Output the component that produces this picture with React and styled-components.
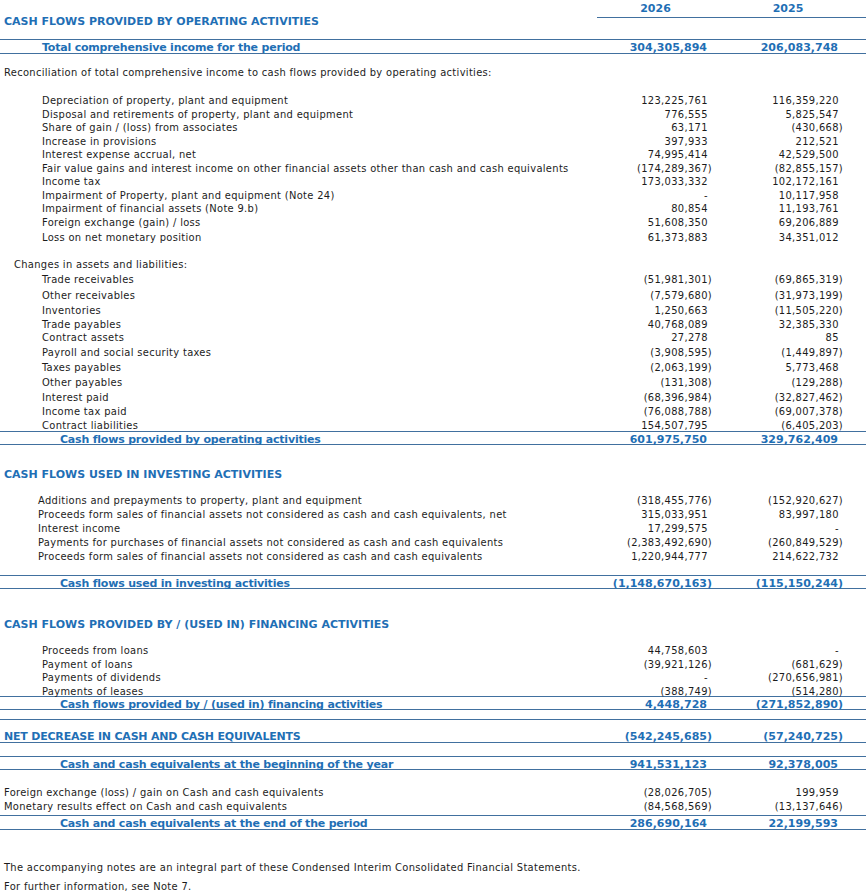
import React from 'react';
import styled, { createGlobalStyle } from 'styled-components';

const BLUE = '#1f6fb5';
const LINE = '#41709f';

const GlobalStyle = createGlobalStyle`
  html, body {
    margin: 0;
    padding: 0;
    background: #fff;
    overflow: hidden;
  }
  body {
    font-family: "DejaVu Sans Condensed", "DejaVu Sans", sans-serif;
    font-size: 11px;
    letter-spacing: 0.33px;
    color: #1c1c1c;
  }
`;

const Sheet = styled.div`
  width: 866px;
`;

const Spacer = styled.div`
  height: ${p => p.$h}px;
`;

const Row = styled.div`
  display: grid;
  grid-template-columns: 1fr 123px 146px;
  height: ${p => p.$h}px;
  line-height: ${p => p.$h + 4}px;
  white-space: nowrap;
`;

const TotalRow = styled(Row)`
  border-top: 1px solid ${LINE};
  border-bottom: 1px solid ${LINE};
  padding-top: ${p => p.$pt || 0}px;
  height: ${p => p.$h - (p.$pt || 0)}px;
  line-height: ${p => p.$h - (p.$pt || 0) + 3}px;
  color: ${BLUE};
  font-family: "DejaVu Sans", sans-serif;
  font-weight: bold;
  letter-spacing: 0;
`;

const Label = styled.div`
  padding-left: ${p => p.$indent}px;
  letter-spacing: ${p => (p.$bold ? '-0.2px' : 'inherit')};
`;

const Year = styled.div`
  text-align: center;
  padding-right: ${p => p.$pr}px;
  border-bottom: 1px solid ${LINE};
  color: ${BLUE};
  font-family: "DejaVu Sans", sans-serif;
  font-weight: bold;
  letter-spacing: 0;
`;

const SectionTitle = styled.div`
  height: ${p => p.$h}px;
  line-height: ${p => p.$h + 4}px;
  padding-left: 4px;
  color: ${BLUE};
  font-family: "DejaVu Sans", sans-serif;
  font-weight: bold;
  letter-spacing: 0;
  white-space: nowrap;
`;

const Note = styled.div`
  height: ${p => p.$h}px;
  line-height: ${p => p.$h + 4}px;
  padding-left: ${p => p.$indent || 4}px;
  white-space: nowrap;
`;

const Num = styled.div`
  text-align: right;
  padding-right: ${p => p.$pr}px;
`;

const Ghost = styled.span`
  visibility: hidden;
`;

const Value = ({ v, col }) => {
  const neg = v.startsWith('(');
  return (
    <Num $pr={col === 1 ? 8 : 23}>
      {v}
      {!neg && <Ghost>)</Ghost>}
    </Num>
  );
};

const Line = ({ label, a, b, indent, h }) => (
  <Row $h={h}>
    <Label $indent={indent}>{label}</Label>
    <Value v={a} col={1} />
    <Value v={b} col={2} />
  </Row>
);

const Total = ({ label, a, b, indent = 60, h = 12, pt }) => (
  <TotalRow $h={h} $pt={pt}>
    <Label $indent={indent} $bold>{label}</Label>
    <Value v={a} col={1} />
    <Value v={b} col={2} />
  </TotalRow>
);

const operating = [
  ['Depreciation of property, plant and equipment', '123,225,761', '116,359,220'],
  ['Disposal and retirements of property, plant and equipment', '776,555', '5,825,547'],
  ['Share of gain / (loss) from associates', '63,171', '(430,668)'],
  ['Increase in provisions', '397,933', '212,521'],
  ['Interest expense accrual, net', '74,995,414', '42,529,500'],
  ['Fair value gains and interest income on other financial assets other than cash and cash equivalents', '(174,289,367)', '(82,855,157)'],
  ['Income tax', '173,033,332', '102,172,161'],
  ['Impairment of Property, plant and equipment (Note 24)', '-', '10,117,958'],
  ['Impairment of financial assets (Note 9.b)', '80,854', '11,193,761'],
  ['Foreign exchange (gain) / loss', '51,608,350', '69,206,889'],
];

const changes = [
  ['Trade receivables', '(51,981,301)', '(69,865,319)', 16],
  ['Other receivables', '(7,579,680)', '(31,973,199)', 15],
  ['Inventories', '1,250,663', '(11,505,220)', 15],
  ['Trade payables', '40,768,089', '32,385,330', 13],
  ['Contract assets', '27,278', '85', 13.5],
  ['Payroll and social security taxes', '(3,908,595)', '(1,449,897)', 15],
  ['Taxes payables', '(2,063,199)', '5,773,468', 15],
  ['Other payables', '(131,308)', '(129,288)', 15],
  ['Interest paid', '(68,396,984)', '(32,827,462)', 15],
  ['Income tax paid', '(76,088,788)', '(69,007,378)', 14.5],
  ['Contract liabilities', '154,507,795', '(6,405,203)', 14],
];

const investing = [
  ['Additions and prepayments to property, plant and equipment', '(318,455,776)', '(152,920,627)'],
  ['Proceeds form sales of financial assets not considered as cash and cash equivalents, net', '315,033,951', '83,997,180'],
  ['Interest income', '17,299,575', '-'],
  ['Payments for purchases of financial assets not considered as cash and cash equivalents', '(2,383,492,690)', '(260,849,529)'],
  ['Proceeds form sales of financial assets not considered as cash and cash equivalents', '1,220,944,777', '214,622,732'],
];

const financing = [
  ['Proceeds from loans', '44,758,603', '-'],
  ['Payment of loans', '(39,921,126)', '(681,629)'],
  ['Payments of dividends', '-', '(270,656,981)'],
  ['Payments of leases', '(388,749)', '(514,280)'],
];

export default function App() {
  return (
    <Sheet>
      <GlobalStyle />
      <Row $h={13}>
        <Label $indent={0} />
        <Year $pr={6}>2026</Year>
        <Year $pr={10}>2025</Year>
      </Row>
      <SectionTitle $h={13}>CASH FLOWS PROVIDED BY OPERATING ACTIVITIES</SectionTitle>
      <Spacer $h={13} />
      <Total label="Total comprehensive income for the period" a="304,305,894" b="206,083,748" indent={42} h={13} />
      <Spacer $h={10} />
      <Note $h={14}>Reconciliation of total comprehensive income to cash flows provided by operating activities:</Note>
      <Spacer $h={14} />
      {operating.map(([l, a, b]) => (
        <Line key={l} label={l} a={a} b={b} indent={42} h={13.5} />
      ))}
      <Spacer $h={2} />
      <Line label="Loss on net monetary position" a="61,373,883" b="34,351,012" indent={42} h={13.5} />
      <Spacer $h={13.5} />
      <Note $h={14} $indent={14}>Changes in assets and liabilities:</Note>
      {changes.map(([l, a, b, h]) => (
        <Line key={l} label={l} a={a} b={b} indent={42} h={h} />
      ))}
      <Total label="Cash flows provided by operating activities" a="601,975,750" b="329,762,409" />
      <Spacer $h={21} />
      <SectionTitle $h={14}>CASH FLOWS USED IN INVESTING ACTIVITIES</SectionTitle>
      <Spacer $h={12} />
      {investing.map(([l, a, b]) => (
        <Line key={l} label={l} a={a} b={b} indent={38} h={14} />
      ))}
      <Spacer $h={13} />
      <Total label="Cash flows used in investing activities" a="(1,148,670,163)" b="(115,150,244)" />
      <Spacer $h={27} />
      <SectionTitle $h={14}>CASH FLOWS PROVIDED BY / (USED IN) FINANCING ACTIVITIES</SectionTitle>
      <Spacer $h={12} />
      {financing.map(([l, a, b]) => (
        <Line key={l} label={l} a={a} b={b} indent={42} h={13.5} />
      ))}
      <Total label="Cash flows provided by / (used in) financing activities" a="4,448,728" b="(271,852,890)" />
      <Spacer $h={9} />
      <Total label="NET DECREASE IN CASH AND CASH EQUIVALENTS" a="(542,245,685)" b="(57,240,725)" indent={4} h={22} pt={9} />
      <Spacer $h={13} />
      <Total label="Cash and cash equivalents at the beginning of the year" a="941,531,123" b="92,378,005" />
      <Spacer $h={14} />
      <Line label="Foreign exchange (loss) / gain on Cash and cash equivalents" a="(28,026,705)" b="199,959" indent={4} h={13.5} />
      <Line label="Monetary results effect on Cash and cash equivalents" a="(84,568,569)" b="(13,137,646)" indent={4} h={13.5} />
      <Spacer $h={4} />
      <Total label="Cash and cash equivalents at the end of the period" a="286,690,164" b="22,199,593" h={13} />
      <Spacer $h={29} />
      <Note $h={14}>The accompanying notes are an integral part of these Condensed Interim Consolidated Financial Statements.</Note>
      <Spacer $h={5} />
      <Note $h={13}>For further information, see Note 7.</Note>
    </Sheet>
  );
}
